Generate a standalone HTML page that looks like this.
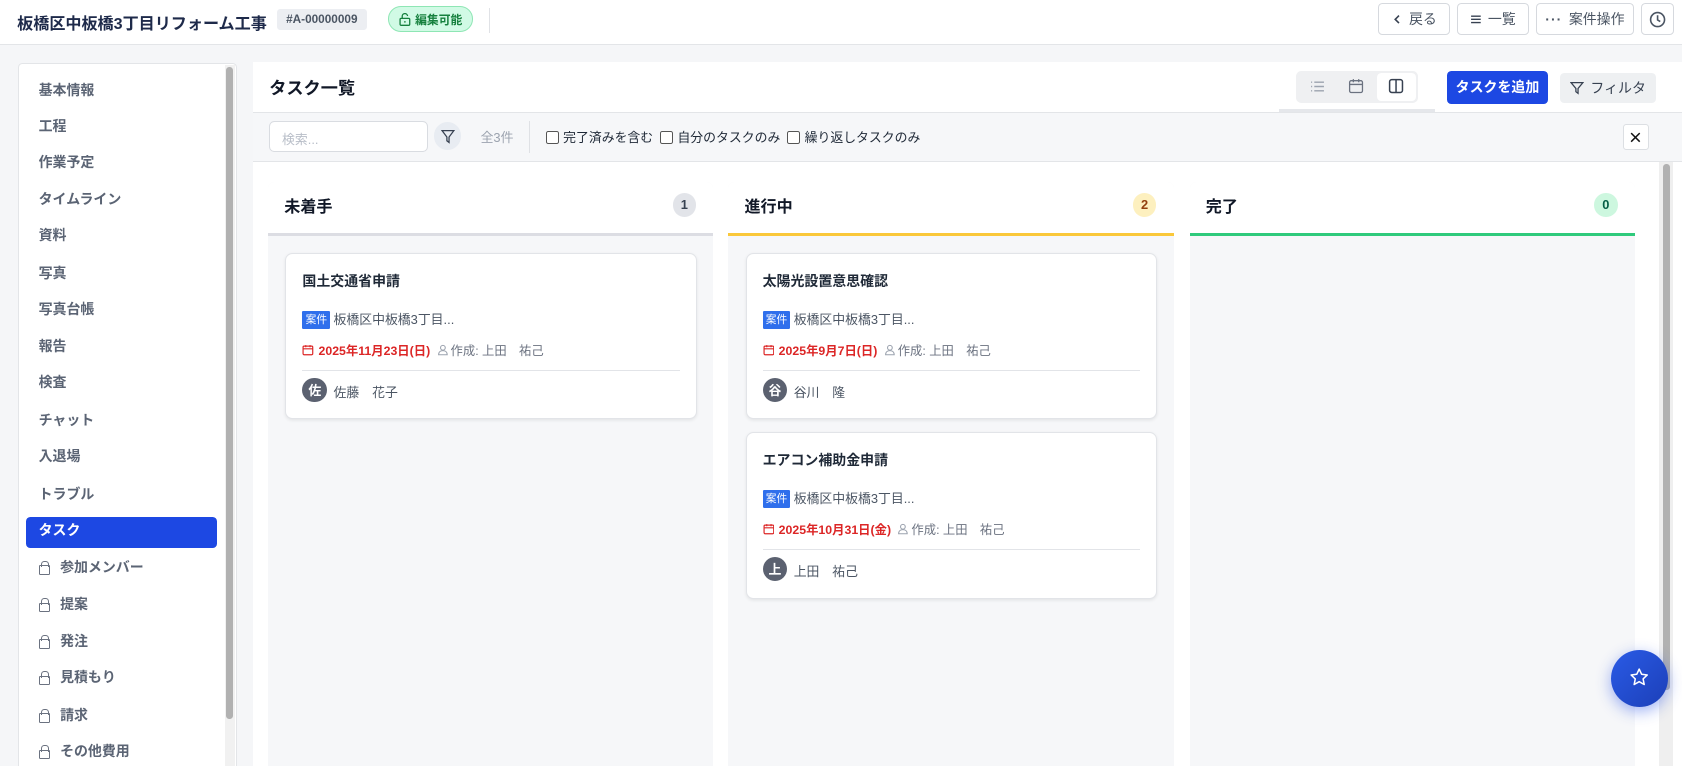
<!DOCTYPE html>
<html><head><meta charset="utf-8"><style>
*{box-sizing:border-box;margin:0;padding:0}
html,body{width:1682px;height:766px;overflow:hidden;background:#f5f6f8}
body{font-family:"Liberation Sans","Noto Sans CJK JP",sans-serif;color:#1f2937}
#z{position:relative;width:1568px;height:714px;zoom:1.0727;overflow:hidden;background:#f5f6f8}
.a{position:absolute}
.hdr{left:0;top:0;width:1568px;height:42px;background:#fff;border-bottom:1px solid #e3e5e8}
.btn{position:absolute;top:3px;height:30px;border:1px solid #d6d9de;border-radius:4px;background:#fff;font-size:13px;color:#4b5563;display:flex;align-items:center;justify-content:center;gap:6px}
.side{left:17px;top:59px;width:204px;height:670px;background:#fff;border:1px solid #e3e5e8;border-radius:4px}
.it{position:absolute;left:36px;font-size:13px;font-weight:bold;color:#5b6474;line-height:16px}
.lk{position:absolute;left:36px;width:11px;height:9px;border:1.3px solid #6b7280;border-radius:1px}
.lk:before{content:"";position:absolute;left:1.5px;top:-5px;width:5px;height:5px;border:1.3px solid #6b7280;border-bottom:none;border-radius:3px 3px 0 0}
.col{position:absolute;top:170px;width:415px;height:560px;background:#f6f7f9;border-radius:6px 6px 0 0}
.ch{position:absolute;left:0;top:0;width:100%;height:47px;background:#fff;border-radius:6px 6px 0 0}
.ct{position:absolute;left:15px;top:10px;font-size:15px;font-weight:bold;color:#111827}
.cb{position:absolute;right:16px;top:10px;width:22px;height:22px;border-radius:11px;font-size:12px;font-weight:bold;display:flex;align-items:center;justify-content:center}
.bar{position:absolute;left:0;top:47px;width:100%;height:3px}
.card{position:absolute;left:16px;width:384px;height:155px;background:#fff;border:1px solid #e2e4e8;border-radius:7px;box-shadow:0 1px 3px rgba(0,0,0,.08)}
.card .t{position:absolute;left:15px;top:16px;font-size:13px;font-weight:bold;color:#1f2937}
.tag{position:absolute;left:15px;top:53px;height:17px;padding:0 3px;background:#2f6fec;color:#fff;font-size:10px;line-height:17px;border-radius:1px}
.pn{position:absolute;left:44px;top:53px;font-size:12px;color:#4b5563;line-height:17px}
.dt{position:absolute;left:15px;top:81px;font-size:11.5px;color:#dc2626;font-weight:bold;display:flex;align-items:center;gap:4px}
.au{font-weight:normal;color:#6b7280;margin-left:2px;display:flex;align-items:center;gap:2px}
.hr{position:absolute;left:15px;right:15px;top:108px;height:1px;background:#e2e4e8}
.av{position:absolute;left:15px;top:115px;width:23px;height:23px;border-radius:12px;background:#5b6170;color:#fff;font-size:12px;font-weight:bold;display:flex;align-items:center;justify-content:center}
.nm{position:absolute;left:44px;top:119px;font-size:12px;color:#4b5563}
.cbx{display:inline-block;width:12px;height:12px;border:1px solid #555;border-radius:2px;vertical-align:-2px;margin-right:4px;background:#fff}
</style></head><body><div id="z">
<div class="a hdr"></div>
<div class="a" style="left:16px;top:9px;font-size:15px;font-weight:bold;color:#1e2a4a">板橋区中板橋3丁目リフォーム工事</div>
<div class="a" style="left:258px;top:8px;width:84px;height:20px;background:#eceef2;border-radius:3px;font-size:11px;font-weight:bold;color:#4b5563;text-align:center;line-height:20px">#A-00000009</div>
<div class="a" style="left:362px;top:6px;width:79px;height:24px;background:#d1fae5;border:1px solid #8ee6b4;border-radius:12px;font-size:11px;font-weight:bold;color:#15803d;display:flex;align-items:center;justify-content:center;gap:4px"><svg width="11" height="12" viewBox="0 0 11 12" fill="none" stroke="#15803d" stroke-width="1.2"><rect x="1" y="5" width="9" height="6.5" rx="1"/><path d="M3 5V3.3a2.5 2.5 0 0 1 5 -.5"/><path d="M5.5 7.5v1.5"/></svg>編集可能</div>
<div class="a" style="left:456px;top:7px;width:1px;height:24px;background:#e0e2e6"></div>
<div class="btn" style="left:1285px;width:67px"><svg width="10" height="10" viewBox="0 0 10 10" fill="none" stroke="#374151" stroke-width="1.5"><path d="M6.5 1.5L3 5l3.5 3.5"/></svg>戻る</div>
<div class="btn" style="left:1358px;width:67px"><svg width="11" height="10" viewBox="0 0 11 10" stroke="#374151" stroke-width="1.3"><path d="M1 2h9M1 5h9M1 8h9"/></svg>一覧</div>
<div class="btn" style="left:1432px;width:91px"><span style="font-weight:bold;letter-spacing:1px">···</span>案件操作</div>
<div class="btn" style="left:1530px;width:31px"><svg width="16" height="16" viewBox="0 0 16 16" fill="none" stroke="#4b5563" stroke-width="1.5"><circle cx="8" cy="8" r="6.5"/><path d="M8 4v4.3l2.5 1.5"/></svg></div>

<div class="a side"></div>
<div class="a" style="left:210px;top:61px;width:9px;height:668px;background:#f1f1f1"></div>
<div class="a" style="left:211px;top:62px;width:6px;height:608px;background:#b1b1b1;border-radius:3px"></div>
<div class="a" style="left:24px;top:482px;width:178px;height:29px;background:#1d48e3;border-radius:4px"></div>
<div class="it" style="top:76px">基本情報</div>
<div class="it" style="top:110px">工程</div>
<div class="it" style="top:144px">作業予定</div>
<div class="it" style="top:178px">タイムライン</div>
<div class="it" style="top:212px">資料</div>
<div class="it" style="top:247px">写真</div>
<div class="it" style="top:281px">写真台帳</div>
<div class="it" style="top:315px">報告</div>
<div class="it" style="top:349px">検査</div>
<div class="it" style="top:384px">チャット</div>
<div class="it" style="top:418px">入退場</div>
<div class="it" style="top:453px">トラブル</div>
<div class="it" style="top:487px;color:#fff">タスク</div>
<div class="lk" style="top:527px"></div><div class="it" style="top:521px;left:56px">参加メンバー</div>
<div class="lk" style="top:562px"></div><div class="it" style="top:556px;left:56px">提案</div>
<div class="lk" style="top:596px"></div><div class="it" style="top:590px;left:56px">発注</div>
<div class="lk" style="top:630px"></div><div class="it" style="top:624px;left:56px">見積もり</div>
<div class="lk" style="top:665px"></div><div class="it" style="top:659px;left:56px">請求</div>
<div class="lk" style="top:699px"></div><div class="it" style="top:693px;left:56px">その他費用</div>

<div class="a" style="left:236px;top:58px;width:1332px;height:656px;background:#fff"></div>
<div class="a" style="left:251px;top:69px;font-size:16px;font-weight:bold;color:#111827">タスク一覧</div>
<div class="a" style="left:1208px;top:66px;width:114px;height:30px;background:#eff0f2;border-radius:5px"></div>
<div class="a" style="left:1284px;top:68px;width:36px;height:26px;background:#fff;border-radius:4px"></div>
<svg class="a" style="left:1221px;top:74px" width="14" height="14" viewBox="0 0 14 14" stroke="#9ca3af" stroke-width="1.3"><path d="M1 3h1M4 3h9M1 7h1M4 7h9M1 11h1M4 11h9"/></svg>
<svg class="a" style="left:1257px;top:73px" width="15" height="15" viewBox="0 0 15 15" fill="none" stroke="#6b7280" stroke-width="1.2"><rect x="1.5" y="2.5" width="12" height="11" rx="1.5"/><path d="M1.5 6h12M5 1v3M10 1v3"/></svg>
<svg class="a" style="left:1294px;top:73px" width="15" height="15" viewBox="0 0 15 15" fill="none" stroke="#374151" stroke-width="1.4"><rect x="1.5" y="1.5" width="12" height="12" rx="2"/><path d="M7.5 1.5v12"/></svg>
<div class="a" style="left:1192px;top:102px;width:146px;height:2px;background:#e5e7eb"></div>
<div class="a" style="left:1349px;top:66px;width:94px;height:31px;background:#1d48e3;border-radius:4px;color:#fff;font-size:13px;font-weight:bold;text-align:center;line-height:31px">タスクを追加</div>
<div class="a" style="left:1454px;top:68px;width:90px;height:28px;background:#eef0f2;border-radius:4px;color:#374151;font-size:13px;display:flex;align-items:center;justify-content:center;gap:6px"><svg width="13" height="13" viewBox="0 0 13 13" fill="none" stroke="#374151" stroke-width="1.2"><path d="M1 1.5h11L7.5 7v4.5L5.5 10V7z"/></svg>フィルタ</div>

<div class="a" style="left:236px;top:104px;width:1332px;height:47px;background:#f6f7f9;border-top:1px solid #e3e5e8;border-bottom:1px solid #e3e5e8"></div>
<div class="a" style="left:251px;top:113px;width:148px;height:29px;background:#fff;border:1px solid #d9dce1;border-radius:5px;font-size:12px;color:#b8bec8;padding:6px 0 0 11px">検索...</div>
<div class="a" style="left:405px;top:114px;width:25px;height:26px;border-radius:13px;background:#e8ecf2"></div>
<svg class="a" style="left:411px;top:120px" width="13" height="14" viewBox="0 0 13 14" fill="none" stroke="#374151" stroke-width="1.2"><path d="M1 1.5h11L7.5 7.5v5L5.5 11V7.5z"/></svg>
<div class="a" style="left:448px;top:118px;font-size:12px;color:#9ca3af">全3件</div>
<div class="a" style="left:493px;top:113px;width:1px;height:30px;background:#dfe1e5"></div>
<div class="a" style="left:509px;top:118px;font-size:12px;color:#1f2937;white-space:nowrap"><span class="cbx"></span>完了済みを含む&nbsp;&nbsp;<span class="cbx"></span>自分のタスクのみ&nbsp;&nbsp;<span class="cbx"></span>繰り返しタスクのみ</div>
<div class="a" style="left:1513px;top:116px;width:24px;height:24px;background:#fff;border:1px solid #dcdfe3;border-radius:3px"></div>
<svg class="a" style="left:1519px;top:122px" width="12" height="12" viewBox="0 0 12 12" stroke="#111" stroke-width="1.4"><path d="M2 2l8 8M10 2l-8 8"/></svg>

<div class="col" style="left:250px"><div class="ch"></div><div class="ct">未着手</div><div class="cb" style="background:#e2e4e9;color:#374151">1</div><div class="bar" style="background:#dcdde3"></div>
<div class="card" style="top:66px"><div class="t">国土交通省申請</div><div class="tag">案件</div><div class="pn">板橋区中板橋3丁目...</div>
<div class="dt"><svg width="11" height="11" viewBox="0 0 11 11" fill="none" stroke="#dc2626" stroke-width="1.1"><rect x="1" y="2" width="9" height="8" rx="1"/><path d="M1 4.5h9M3.5 1v2M7.5 1v2"/></svg>2025年11月23日(日)<span class="au"><svg width="11" height="11" viewBox="0 0 11 11" fill="none" stroke="#9ca3af" stroke-width="1"><circle cx="5.5" cy="3.5" r="2.2"/><path d="M1.5 10c0-2.5 1.8-3.8 4-3.8s4 1.3 4 3.8z"/></svg>作成: 上田　祐己</span></div>
<div class="hr"></div><div class="av">佐</div><div class="nm">佐藤　花子</div></div>
</div>
<div class="col" style="left:679px"><div class="ch"></div><div class="ct">進行中</div><div class="cb" style="background:#fdf0bf;color:#92400e">2</div><div class="bar" style="background:#fac83a"></div>
<div class="card" style="top:66px"><div class="t">太陽光設置意思確認</div><div class="tag">案件</div><div class="pn">板橋区中板橋3丁目...</div>
<div class="dt"><svg width="11" height="11" viewBox="0 0 11 11" fill="none" stroke="#dc2626" stroke-width="1.1"><rect x="1" y="2" width="9" height="8" rx="1"/><path d="M1 4.5h9M3.5 1v2M7.5 1v2"/></svg>2025年9月7日(日)<span class="au"><svg width="11" height="11" viewBox="0 0 11 11" fill="none" stroke="#9ca3af" stroke-width="1"><circle cx="5.5" cy="3.5" r="2.2"/><path d="M1.5 10c0-2.5 1.8-3.8 4-3.8s4 1.3 4 3.8z"/></svg>作成: 上田　祐己</span></div>
<div class="hr"></div><div class="av">谷</div><div class="nm">谷川　隆</div></div>
<div class="card" style="top:233px"><div class="t">エアコン補助金申請</div><div class="tag">案件</div><div class="pn">板橋区中板橋3丁目...</div>
<div class="dt"><svg width="11" height="11" viewBox="0 0 11 11" fill="none" stroke="#dc2626" stroke-width="1.1"><rect x="1" y="2" width="9" height="8" rx="1"/><path d="M1 4.5h9M3.5 1v2M7.5 1v2"/></svg>2025年10月31日(金)<span class="au"><svg width="11" height="11" viewBox="0 0 11 11" fill="none" stroke="#9ca3af" stroke-width="1"><circle cx="5.5" cy="3.5" r="2.2"/><path d="M1.5 10c0-2.5 1.8-3.8 4-3.8s4 1.3 4 3.8z"/></svg>作成: 上田　祐己</span></div>
<div class="hr"></div><div class="av">上</div><div class="nm">上田　祐己</div></div>
</div>
<div class="col" style="left:1109px"><div class="ch"></div><div class="ct">完了</div><div class="cb" style="background:#cdf7df;color:#065f46">0</div><div class="bar" style="background:#2fca7c"></div></div>

<div class="a" style="left:1547px;top:151px;width:13px;height:563px;background:#efefef"></div>
<div class="a" style="left:1550px;top:153px;width:7px;height:490px;background:#b1b1b1;border-radius:3px"></div>
<div class="a" style="left:1502px;top:606px;width:53px;height:53px;border-radius:27px;background:linear-gradient(135deg,#2a5be6,#1c3fb8);box-shadow:0 4px 14px rgba(37,80,230,.45)"></div>
<svg class="a" style="left:1519px;top:622px" width="19" height="19" viewBox="0 0 24 24" fill="none" stroke="#fff" stroke-width="1.8" stroke-linejoin="round"><path d="M12 2.5l2.9 6.1 6.6.8-4.9 4.6 1.3 6.6L12 17.3l-5.9 3.3 1.3-6.6-4.9-4.6 6.6-.8z"/></svg>
</div></body></html>
